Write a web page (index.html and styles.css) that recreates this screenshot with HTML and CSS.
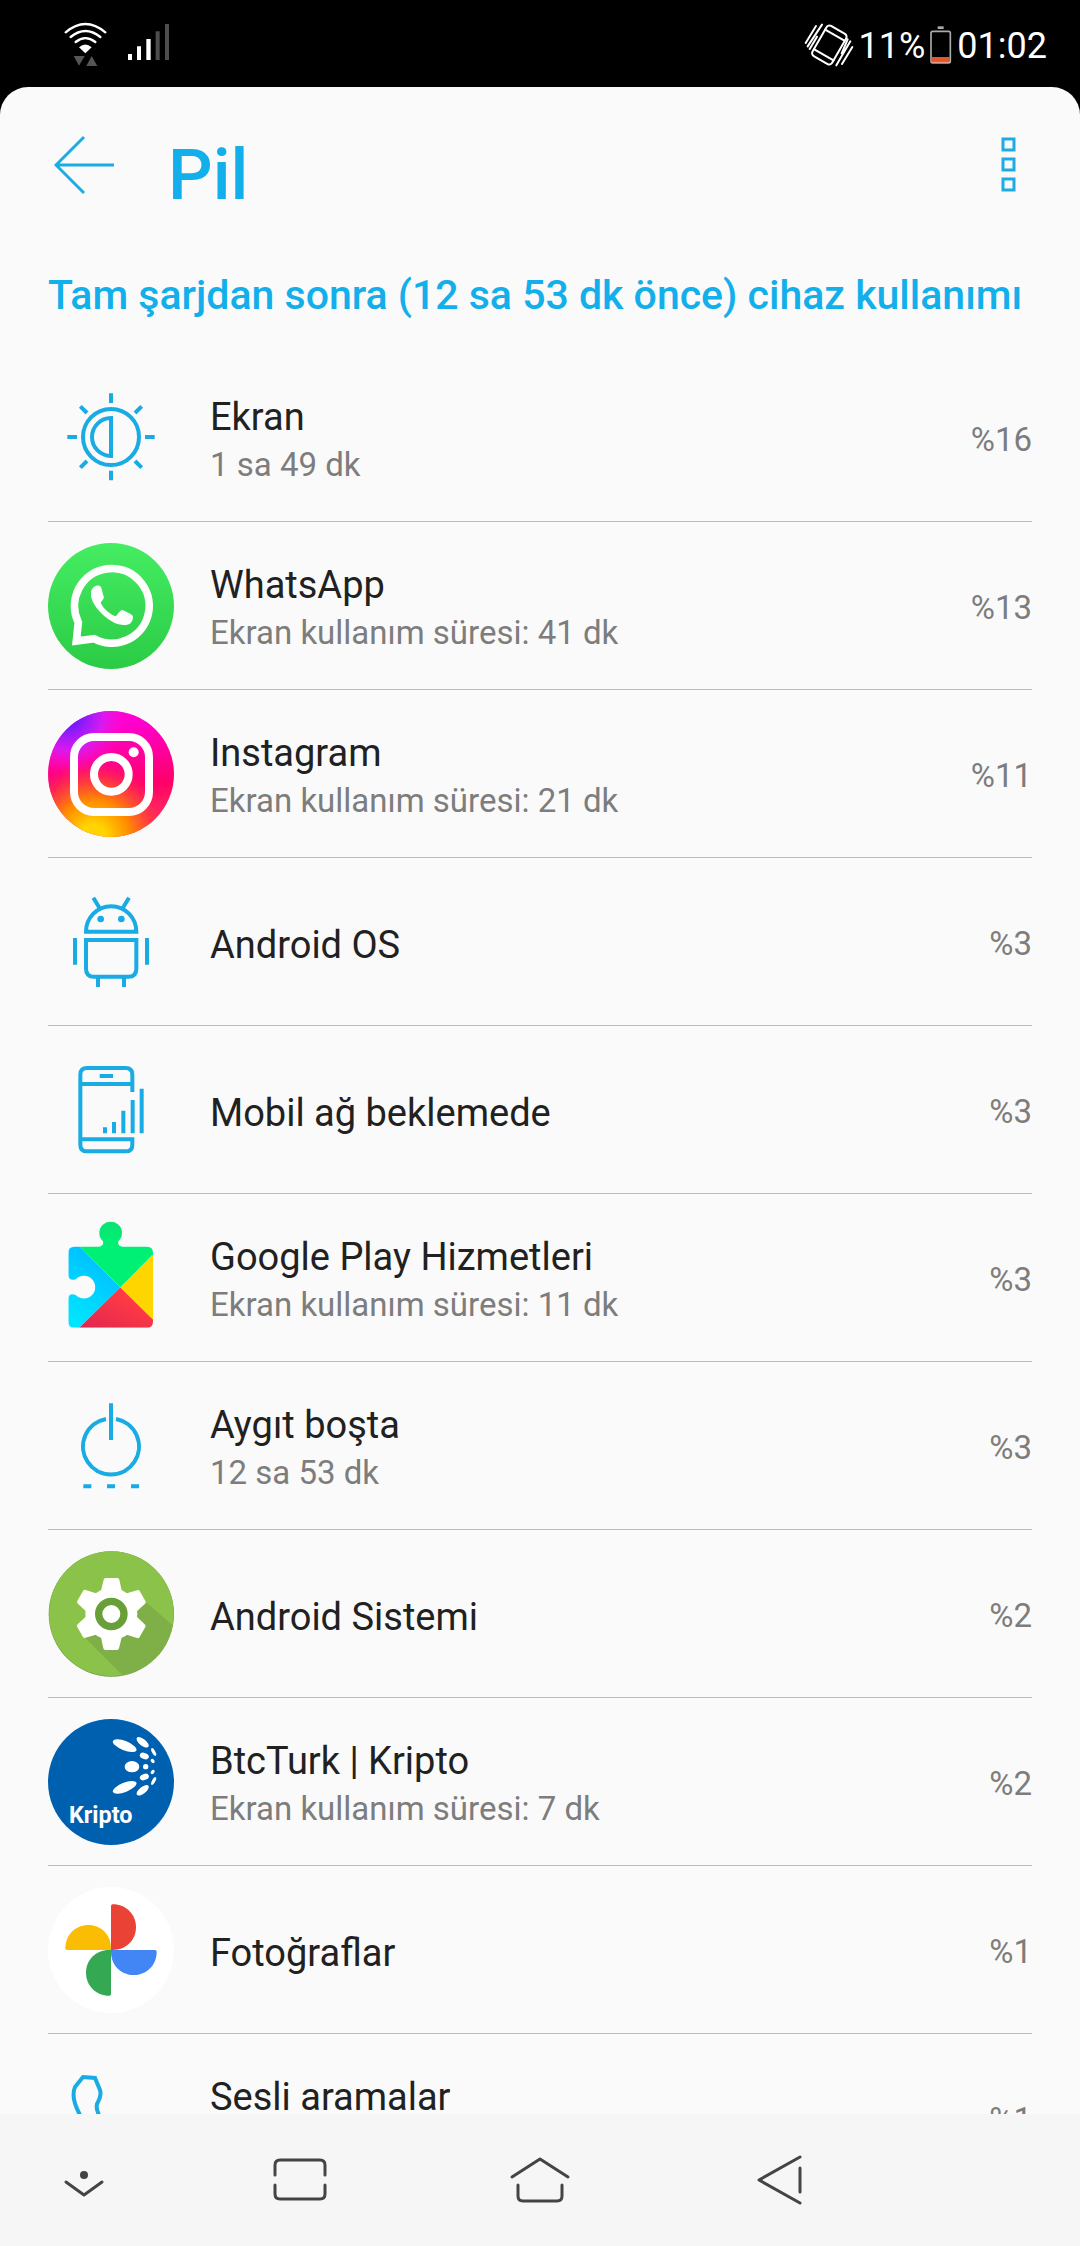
FILE: index.html
```html
<!DOCTYPE html>
<html lang="tr">
<head>
<meta charset="utf-8">
<meta name="viewport" content="width=device-width, initial-scale=1">
<title>Pil</title>
<link rel="stylesheet" href="styles.css">
</head>
<body>
<div class="status-bar">
  <div class="status-group status-group--network">
    <svg class="wifi" viewBox="192 66 129 135" aria-hidden="true">
      <g fill="none" stroke="#fff" stroke-width="7" stroke-linecap="round">
        <path d="M197 97Q256 47 316 97M212 111Q256 75 301 111M227 126Q256 103 286 126"/>
      </g>
      <path fill="#fff" d="M237 142Q256 125 275 142L256 160Z"/>
      <path fill="#555" d="M221 168H254L237 197ZM275 168L292 198H259Z"/>
    </svg>
    <svg class="signal" viewBox="384 72 123 129" aria-hidden="true">
      <path fill="#fff" d="M384 165h12v18h-12zM411 142h12v41h-12zM439 120h13v63h-13z"/>
      <path fill="#4d4d4d" d="M467 97h12v86h-12zM495 75h12v108h-12z"/>
    </svg>
  </div>
  <div class="status-group">
    <svg class="vibrate" viewBox="249 63 150 132" aria-hidden="true">
      <g fill="none" stroke="#fff" stroke-width="6" stroke-linecap="round">
        <g transform="rotate(30 325 129)">
          <rect x="291" y="77" width="68" height="104" rx="10"/>
          <path d="M291 95H359M291 163H359"/>
        </g>
        <path d="M254 123L285 72M260 133L303 68M266 141L288 104M346 190L388 118M363 186L394 135M362 154L380 112"/>
      </g>
    </svg>
    <span class="status-text">11%</span>
    <svg class="battery" viewBox="637 72 66 114" aria-hidden="true">
      <path fill="#aaa" d="M660 73h18v8h-18z"/>
      <rect x="640" y="88" width="58" height="95" rx="5" fill="none" stroke="#aaa" stroke-width="5"/>
      <path fill="#e4572b" d="M642 165h55v13h-55z"/>
      <path fill="#d9a18e" d="M642 178h55v5h-55z"/>
    </svg>
    <time class="status-text">01:02</time>
  </div>
</div>

<div class="sheet">
  <header class="app-bar">
    <button class="icon-button back" type="button" aria-label="Geri">
      <svg viewBox="0 0 60 60" aria-hidden="true"><path d="M30 2L2 30L30 58M2 30H60" fill="none" stroke="#1cabe2" stroke-width="3"/></svg>
    </button>
    <h1 class="title">Pil</h1>
    <button class="icon-button menu" type="button" aria-label="Menü">
      <svg viewBox="0 0 15 60" aria-hidden="true"><path d="M2 4h11v11H2zM2 24h11v11H2zM2 44h11v11H2z" fill="none" stroke="#1cabe2" stroke-width="3"/></svg>
    </button>
  </header>

  <main class="content">
    <h2 class="section-title">Tam şarjdan sonra (12 sa 53 dk önce) cihaz kullanımı</h2>
    <ul class="usage-list">
      <li><a class="usage" href="#ekran">
        <svg class="app-icon" viewBox="54 42 378 378" aria-hidden="true">
          <g fill="none" stroke="#19abe3" stroke-width="12">
            <circle cx="243" cy="228" r="84"/>
            <path d="M243 171A57 57 0 0 0 243 285Z"/>
            <path d="M243 97V126M243 329V358M112 228H141M345 228H374M151 136L171 156M315 300L335 320M335 136L315 156M171 300L151 320"/>
          </g>
        </svg>
        <span class="app-text"><span class="app-name">Ekran</span><span class="app-detail">1 sa 49 dk</span></span>
        <span class="share">%16</span>
      </a></li>
      <li><a class="usage" href="#whatsapp">
        <svg class="app-icon" viewBox="54 546 378 378" aria-hidden="true">
          <defs><linearGradient id="wa" x1="0" y1="0" x2="0" y2="1"><stop offset="0" stop-color="#45ed62"/><stop offset="1" stop-color="#2bcb46"/></linearGradient></defs>
          <circle cx="243" cy="735" r="189" fill="url(#wa)"/>
          <path d="M145 784A112 112 0 1 1 192 833L139 840Z" fill="none" stroke="#fff" stroke-width="23"/>
          <path fill="#fff" d="M183 694C185 680 197 672 208 674C216 676 216 692 221 706C223 716 214 720 212 726C222 745 238 758 256 766C264 762 268 748 277 747C286 750 297 756 306 762C312 768 308 779 302 786C294 794 278 793 266 790C224 776 186 732 183 704Z"/>
        </svg>
        <span class="app-text"><span class="app-name">WhatsApp</span><span class="app-detail">Ekran kullanım süresi: 41 dk</span></span>
        <span class="share">%13</span>
      </a></li>
      <li><a class="usage" href="#instagram">
        <svg class="app-icon" viewBox="54 63 378 378" aria-hidden="true">
          <defs>
            <linearGradient id="ig-base" x1="0.55" y1="0" x2="0.65" y2="1"><stop offset="0.1" stop-color="#ff00d0"/><stop offset="0.6" stop-color="#ff0068"/><stop offset="1" stop-color="#ff4a50"/></linearGradient>
            <radialGradient id="ig-warm" gradientUnits="userSpaceOnUse" cx="190" cy="440" r="245"><stop offset="0.15" stop-color="#ffd400"/><stop offset="0.45" stop-color="#ff8a00"/><stop offset="0.72" stop-color="#ff3a40" stop-opacity="0.8"/><stop offset="1" stop-color="#ff0080" stop-opacity="0"/></radialGradient>
            <radialGradient id="ig-cool" gradientUnits="userSpaceOnUse" cx="115" cy="75" r="175"><stop offset="0.15" stop-color="#6a1cff"/><stop offset="0.6" stop-color="#d41cf4" stop-opacity="0.9"/><stop offset="1" stop-color="#ff10d8" stop-opacity="0"/></radialGradient>
          </defs>
          <circle cx="243" cy="252" r="189" fill="url(#ig-base)"/>
          <circle cx="243" cy="252" r="189" fill="url(#ig-warm)"/>
          <circle cx="243" cy="252" r="189" fill="url(#ig-cool)"/>
          <rect x="132" y="141" width="225" height="225" rx="60" fill="none" stroke="#fff" stroke-width="24"/>
          <circle cx="244" cy="253" r="52" fill="none" stroke="#fff" stroke-width="24"/>
          <circle cx="311" cy="187" r="15" fill="#fff"/>
        </svg>
        <span class="app-text"><span class="app-name">Instagram</span><span class="app-detail">Ekran kullanım süresi: 21 dk</span></span>
        <span class="share">%11</span>
      </a></li>
      <li><a class="usage" href="#android-os">
        <svg class="app-icon" viewBox="54 567 378 378" aria-hidden="true">
          <g fill="none" stroke="#19abe3" stroke-width="12">
            <path d="M168 725A75 76 0 0 1 319 725Z"/>
            <path d="M168 750H319V836Q319 860 295 860H192Q168 860 168 836Z"/>
            <path d="M135 744V824M351 744V824M204 862V891M282 862V891M190 623L209 655M297 623L278 655"/>
          </g>
          <circle cx="212" cy="687" r="10" fill="#19abe3"/><circle cx="274" cy="687" r="10" fill="#19abe3"/>
        </svg>
        <span class="app-text"><span class="app-name">Android OS</span></span>
        <span class="share">%3</span>
      </a></li>
      <li><a class="usage" href="#mobil-ag">
        <svg class="app-icon" viewBox="54 21 378 378" aria-hidden="true">
          <path fill="none" stroke="#19abe3" stroke-width="12" d="M307 156V104Q307 84 287 84H171Q151 84 151 104V314Q151 334 171 334H287Q307 334 307 314V298H151M151 132H307M209 108H249"/>
          <path fill="#19abe3" d="M219 262h12v18h-12zM246 246h12v34h-12zM274 212h12v68h-12zM302 180h12v100h-12zM329 146h12v134h-12z"/>
        </svg>
        <span class="app-text"><span class="app-name">Mobil ağ beklemede</span></span>
        <span class="share">%3</span>
      </a></li>
      <li><a class="usage" href="#google-play">
        <svg class="app-icon" viewBox="54 525 378 378" aria-hidden="true">
          <defs>
            <clipPath id="piece"><path d="M133 620H208Q222 618 219 604A34 34 0 1 1 265 604Q262 618 276 620H351Q369 620 369 638V845Q369 863 351 863H133Q115 863 115 845V776Q117 757 137 765A34 34 0 1 0 137 718Q117 724 115 706V638Q115 620 133 620Z"/></clipPath>
            <linearGradient id="gp-blue" x1="0.6" y1="0" x2="0.2" y2="1"><stop offset="0.1" stop-color="#00bfff"/><stop offset="0.9" stop-color="#00e4ff"/></linearGradient>
            <linearGradient id="gp-red" x1="1" y1="0" x2="0" y2="1"><stop offset="0.3" stop-color="#ff3a44"/><stop offset="1" stop-color="#dd2452"/></linearGradient>
            <linearGradient id="gp-green" x1="0" y1="0" x2="0" y2="1"><stop offset="0" stop-color="#0ce070"/><stop offset="0.4" stop-color="#00f076"/></linearGradient>
          </defs>
          <g clip-path="url(#piece)">
            <path fill="url(#gp-blue)" d="M110 610H138L271 742L138 873H110Z"/>
            <path fill="url(#gp-red)" d="M138 873L271 742L379 848V873Z"/>
            <path fill="#ffd500" d="M379 633V848L271 742Z"/>
            <path fill="url(#gp-green)" d="M148 530H379V633L271 742L148 620Z"/>
          </g>
        </svg>
        <span class="app-text"><span class="app-name">Google Play Hizmetleri</span><span class="app-detail">Ekran kullanım süresi: 11 dk</span></span>
        <span class="share">%3</span>
      </a></li>
      <li><a class="usage" href="#aygit-bosta">
        <svg class="app-icon" viewBox="54 39 378 378" aria-hidden="true">
          <path fill="none" stroke="#19abe3" stroke-width="12" d="M228 147A84 84 0 1 0 258 147M243 100V210M160 349H184M231 349H255M303 349H327"/>
        </svg>
        <span class="app-text"><span class="app-name">Aygıt boşta</span><span class="app-detail">12 sa 53 dk</span></span>
        <span class="share">%3</span>
      </a></li>
      <li><a class="usage" href="#android-sistemi">
        <svg class="app-icon" viewBox="54 543 378 378" aria-hidden="true">
          <defs>
            <clipPath id="disc"><circle cx="244" cy="731" r="187"/></clipPath>
            <path id="tooth" d="M221 629Q222 624 227 624H262Q267 624 268 629L276 666H212Z"/>
          </defs>
          <circle cx="244" cy="732" r="188" fill="#6f9c3c"/>
          <circle cx="244" cy="731" r="187" fill="#8bc34a"/>
          <path fill="#7fb047" clip-path="url(#disc)" d="M345 694L460 794V940H302L160 799L244 732Z"/>
          <g fill="#fff">
            <circle cx="244" cy="732" r="78"/>
            <use href="#tooth"/>
            <use href="#tooth" transform="rotate(60 244 732)"/>
            <use href="#tooth" transform="rotate(120 244 732)"/>
            <use href="#tooth" transform="rotate(180 244 732)"/>
            <use href="#tooth" transform="rotate(240 244 732)"/>
            <use href="#tooth" transform="rotate(300 244 732)"/>
          </g>
          <circle cx="244" cy="732" r="38" fill="#fff" stroke="#689f38" stroke-width="22"/>
        </svg>
        <span class="app-text"><span class="app-name">Android Sistemi</span></span>
        <span class="share">%2</span>
      </a></li>
      <li><a class="usage" href="#btcturk">
        <svg class="app-icon" viewBox="54 57 378 378" aria-hidden="true">
          <circle cx="243" cy="246" r="189" fill="#0060b0"/>
          <g fill="#fff">
            <ellipse cx="284" cy="137" rx="38" ry="14" transform="rotate(22 284 137)"/>
            <ellipse cx="338" cy="127" rx="22" ry="10" transform="rotate(38 338 127)"/>
            <ellipse cx="371" cy="156" rx="13" ry="5" transform="rotate(62 371 156)"/>
            <ellipse cx="343" cy="168" rx="14" ry="9" transform="rotate(20 343 168)"/>
            <ellipse cx="368" cy="183" rx="7" ry="5" transform="rotate(45 368 183)"/>
            <ellipse cx="306" cy="200" rx="22" ry="17"/>
            <circle cx="347" cy="200" r="8"/>
            <ellipse cx="368" cy="216" rx="7" ry="5" transform="rotate(-45 368 216)"/>
            <ellipse cx="343" cy="231" rx="14" ry="9" transform="rotate(-20 343 231)"/>
            <ellipse cx="371" cy="243" rx="13" ry="5" transform="rotate(-62 371 243)"/>
            <ellipse cx="338" cy="271" rx="22" ry="10" transform="rotate(-38 338 271)"/>
            <ellipse cx="284" cy="262" rx="38" ry="14" transform="rotate(-22 284 262)"/>
            <text class="logo-text" x="117" y="368">Kripto</text>
          </g>
        </svg>
        <span class="app-text"><span class="app-name">BtcTurk | Kripto</span><span class="app-detail">Ekran kullanım süresi: 7 dk</span></span>
        <span class="share">%2</span>
      </a></li>
      <li><a class="usage" href="#fotograflar">
        <svg class="app-icon" viewBox="54 561 378 378" aria-hidden="true">
          <defs><path id="blade" d="M243 750V618Q243 613 248 613C289 613 318 644 318 682C318 720 289 750 248 750Z"/></defs>
          <circle cx="243" cy="750" r="189" fill="#fff"/>
          <use href="#blade" fill="#ea4335"/>
          <use href="#blade" fill="#4285f4" transform="rotate(90 243 750)"/>
          <use href="#blade" fill="#34a853" transform="rotate(180 243 750)"/>
          <use href="#blade" fill="#fbbc04" transform="rotate(270 243 750)"/>
        </svg>
        <span class="app-text"><span class="app-name">Fotoğraflar</span></span>
        <span class="share">%1</span>
      </a></li>
      <li><a class="usage" href="#sesli-aramalar">
        <svg class="app-icon" viewBox="48 2055 126 126" aria-hidden="true">
          <path fill="none" stroke="#19abe3" stroke-width="4" d="M80 2115C74 2104 72 2094 75 2087L83 2077L95 2078L100 2090C102 2096 99 2100 97 2104C96 2108 97 2111 99 2115"/>
        </svg>
        <span class="app-text"><span class="app-name">Sesli aramalar</span><span class="app-detail"></span></span>
        <span class="share">%1</span>
      </a></li>
    </ul>
  </main>
</div>

<nav class="nav-bar" aria-label="Sistem">
  <button class="nav-button nav-button--edge" type="button" aria-label="Gizle">
    <svg viewBox="0 0 64 64" aria-hidden="true"><circle cx="32" cy="27" r="4" fill="#444"/><path d="M14 34L32 47L50 34"/></svg>
  </button>
  <button class="nav-button" type="button" aria-label="Son uygulamalar">
    <svg viewBox="0 0 64 64" aria-hidden="true"><path d="M7 27V17Q7 12 12 12H52Q57 12 57 17V27M7 37V46Q7 51 12 51H52Q57 51 57 46V37"/></svg>
  </button>
  <button class="nav-button" type="button" aria-label="Ana ekran">
    <svg viewBox="0 0 64 64" aria-hidden="true"><path d="M4 29L32 11L60 29M10 37V48Q10 53 15 53H49Q54 53 54 48V37"/></svg>
  </button>
  <button class="nav-button" type="button" aria-label="Geri">
    <svg viewBox="0 0 64 64" aria-hidden="true"><path d="M52 9L11 32L52 55M52 20V44"/></svg>
  </button>
</nav>
</body>
</html>
```
FILE: styles.css
```css
* {
  box-sizing: border-box;
}

body {
  margin: 0;
  height: 100vh;
  display: flex;
  flex-direction: column;
  background: #000;
  color: #212121;
  font-family: Roboto, sans-serif;
}

svg {
  display: block;
}

.status-bar {
  display: flex;
  flex: none;
  align-items: center;
  justify-content: space-between;
  height: 87px;
  padding: 2px 33px 0 64px;
  color: #fff;
}

.status-group {
  display: flex;
  align-items: center;
  gap: 5px;
}

.status-group--network {
  gap: 21px;
}

.status-text {
  padding-top: 2px;
  font-size: 36px;
  line-height: 44px;
}

.wifi {
  width: 43px;
  height: 45px;
}

.signal {
  width: 41px;
  height: 43px;
}

.vibrate {
  width: 50px;
  height: 44px;
}

.battery {
  width: 22px;
  height: 38px;
}

.sheet {
  display: flex;
  flex: 1;
  flex-direction: column;
  min-height: 0;
  padding: 48px 48px 0;
  border-radius: 28px 28px 0 0;
  background: #fafafa;
}

.app-bar {
  display: flex;
  flex: none;
  align-items: flex-start;
  padding: 0 16px 0 6px;
}

.icon-button {
  height: 60px;
  padding: 0;
  border: 0;
  background: none;
}

.back {
  width: 60px;
}

.menu {
  width: 15px;
}

.title {
  flex: 1;
  margin: 0 0 0 54px;
  color: #12afeb;
  font-size: 70px;
  font-weight: 500;
  line-height: 80px;
}

.content {
  flex: 1;
  min-height: 0;
  overflow-y: auto;
  scrollbar-width: none;
}

.section-title {
  margin: 52px 0 31px;
  color: #12afeb;
  font-size: 41px;
  font-weight: 500;
  line-height: 56px;
  white-space: nowrap;
}

.usage-list {
  margin: 0;
  padding: 0;
  list-style: none;
}

.usage {
  display: flex;
  align-items: center;
  gap: 36px;
  padding: 21px 0 20px;
  border-bottom: 1px solid #bcbcbc;
  color: inherit;
  text-decoration: none;
}

.app-icon {
  flex: none;
  width: 126px;
  height: 126px;
}

.logo-text {
  font-size: 70px;
  font-weight: 700;
}

.app-text {
  display: flex;
  flex: 1;
  flex-direction: column;
  padding-top: 5px;
}

.app-name {
  font-size: 38px;
  line-height: 48px;
}

.app-detail {
  min-height: 48px;
  color: #7d7d7d;
  font-size: 33px;
  line-height: 48px;
}

.share {
  padding-top: 3px;
  color: #7d7d7d;
  font-size: 33px;
  line-height: 48px;
}

.nav-bar {
  display: grid;
  flex: none;
  grid-template-columns: 3fr 4fr 4fr 4fr 3fr;
  height: 132px;
  background: #f6f6f6;
}

.nav-button {
  display: flex;
  align-items: center;
  justify-content: center;
  padding: 0;
  border: 0;
  background: none;
}

.nav-button--edge {
  padding-right: 12px;
}

.nav-button svg {
  width: 64px;
  height: 64px;
}

.nav-button path {
  fill: none;
  stroke: #444;
  stroke-width: 3;
  stroke-linecap: round;
  stroke-linejoin: round;
}
```
